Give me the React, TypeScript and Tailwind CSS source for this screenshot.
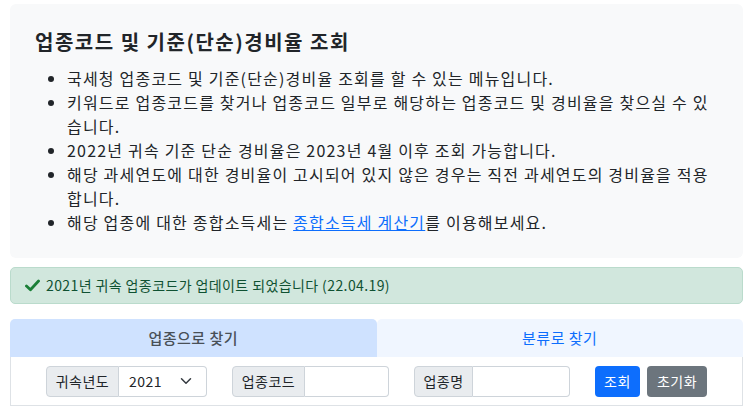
import React, { useState } from 'react';

const bullets: React.ReactNode[] = [
  '국세청 업종코드 및 기준(단순)경비율 조회를 할 수 있는 메뉴입니다.',
  <>
    키워드로 업종코드를 찾거나 업종코드 일부로 해당하는 업종코드 및 경비율을 찾으실 수 있
    <br />
    습니다.
  </>,
  '2022년 귀속 기준 단순 경비율은 2023년 4월 이후 조회 가능합니다.',
  <>
    해당 과세연도에 대한 경비율이 고시되어 있지 않은 경우는 직전 과세연도의 경비율을 적용
    <br />
    합니다.
  </>,
  <>
    해당 업종에 대한 종합소득세는{' '}
    <a href="#" className="text-[#0d6efd] underline">
      종합소득세 계산기
    </a>
    를 이용해보세요.
  </>,
];

const CheckIcon = () => (
  <svg width="15" height="13" viewBox="0 0 16 14" className="shrink-0">
    <path
      d="M1.5 7.5 L5.8 11.6 L14.5 2.2"
      fill="none"
      stroke="#1a7f37"
      strokeWidth="3"
      strokeLinecap="round"
      strokeLinejoin="round"
    />
  </svg>
);

const Chevron = () => (
  <svg width="12" height="12" viewBox="0 0 16 16" className="shrink-0">
    <path
      d="M2 5l6 6 6-6"
      fill="none"
      stroke="#343a40"
      strokeWidth="2"
      strokeLinecap="round"
      strokeLinejoin="round"
    />
  </svg>
);

const InputGroup = ({
  label,
  labelWidth,
  children,
}: {
  label: string;
  labelWidth: string;
  children: React.ReactNode;
}) => (
  <div className="flex h-[31px] text-sm tracking-[0.5px]">
    <span
      className={`${labelWidth} flex items-center justify-center bg-[#e9ecef] border border-[#ced4da] rounded-l-[4px] text-[#212529]`}
    >
      {label}
    </span>
    {children}
  </div>
);

export default function App() {
  const [tab, setTab] = useState<'industry' | 'category'>('industry');
  const [code, setCode] = useState('');
  const [name, setName] = useState('');

  return (
    <div
      className="w-[753px] h-[415px] bg-white px-[10px] pt-[4px] text-[#212529] overflow-hidden"
      style={{ fontFamily: '"Noto Sans CJK KR", sans-serif' }}
    >
      <div className="bg-[#f8f9fa] rounded-[6px] pl-[25px] pr-2 pt-[26px] pb-6">
        <h5 className="text-[20px] leading-[24px] font-bold mb-3 tracking-[1.5px]">
          업종코드 및 기준(단순)경비율 조회
        </h5>
        <ul className="list-disc pl-8 text-base leading-6 tracking-[1.2px]">
          {bullets.map((b, i) => (
            <li key={i}>{b}</li>
          ))}
        </ul>
      </div>

      <div className="mt-[9px] flex items-center gap-[6px] bg-[#d1e7dd] border border-[#badbcc] rounded-[5px] pl-[14px] py-2 text-sm leading-[19px] tracking-[0.4px] text-[#0f5132]">
        <CheckIcon />
        <span>2021년 귀속 업종코드가 업데이트 되었습니다 (22.04.19)</span>
      </div>

      <div className="mt-[15px]">
        <div className="flex h-[38px] tracking-[0.5px]">
          <button
            onClick={() => setTab('industry')}
            className={`flex-1 rounded-t-[5px] text-[15px] ${
              tab === 'industry'
                ? 'bg-[#cfe2ff] text-[#495057] font-medium'
                : 'bg-[#f0f6ff] text-[#0d6efd]'
            }`}
          >
            업종으로 찾기
          </button>
          <button
            onClick={() => setTab('category')}
            className={`flex-1 rounded-t-[5px] text-[15px] ${
              tab === 'category'
                ? 'bg-[#cfe2ff] text-[#495057] font-medium'
                : 'bg-[#f0f6ff] text-[#0d6efd]'
            }`}
          >
            분류로 찾기
          </button>
        </div>
        <div className="flex justify-center items-center gap-[25px] h-[49px] border border-t-0 border-[#dee2e6]">
          <InputGroup label="귀속년도" labelWidth="w-[73px]">
            <div className="w-[88px] flex items-center justify-between pl-[10px] pr-[14px] border border-l-0 border-[#ced4da] rounded-r-[4px] bg-white">
              <span>2021</span>
              <Chevron />
            </div>
          </InputGroup>
          <InputGroup label="업종코드" labelWidth="w-[73px]">
            <input
              value={code}
              onChange={(e) => setCode(e.target.value)}
              className="w-[84px] border border-l-0 border-[#ced4da] rounded-r-[4px] bg-white px-2 outline-none"
            />
          </InputGroup>
          <InputGroup label="업종명" labelWidth="w-[59px]">
            <input
              value={name}
              onChange={(e) => setName(e.target.value)}
              className="w-[97px] border border-l-0 border-[#ced4da] rounded-r-[4px] bg-white px-2 outline-none"
            />
          </InputGroup>
          <div className="flex gap-[7px] text-sm tracking-[0.5px]">
            <button className="w-[45px] h-[31px] rounded-[4px] bg-[#0d6efd] text-white">
              조회
            </button>
            <button
              onClick={() => {
                setCode('');
                setName('');
              }}
              className="w-[60px] h-[31px] rounded-[4px] bg-[#6c757d] text-white"
            >
              초기화
            </button>
          </div>
        </div>
      </div>
    </div>
  );
}
